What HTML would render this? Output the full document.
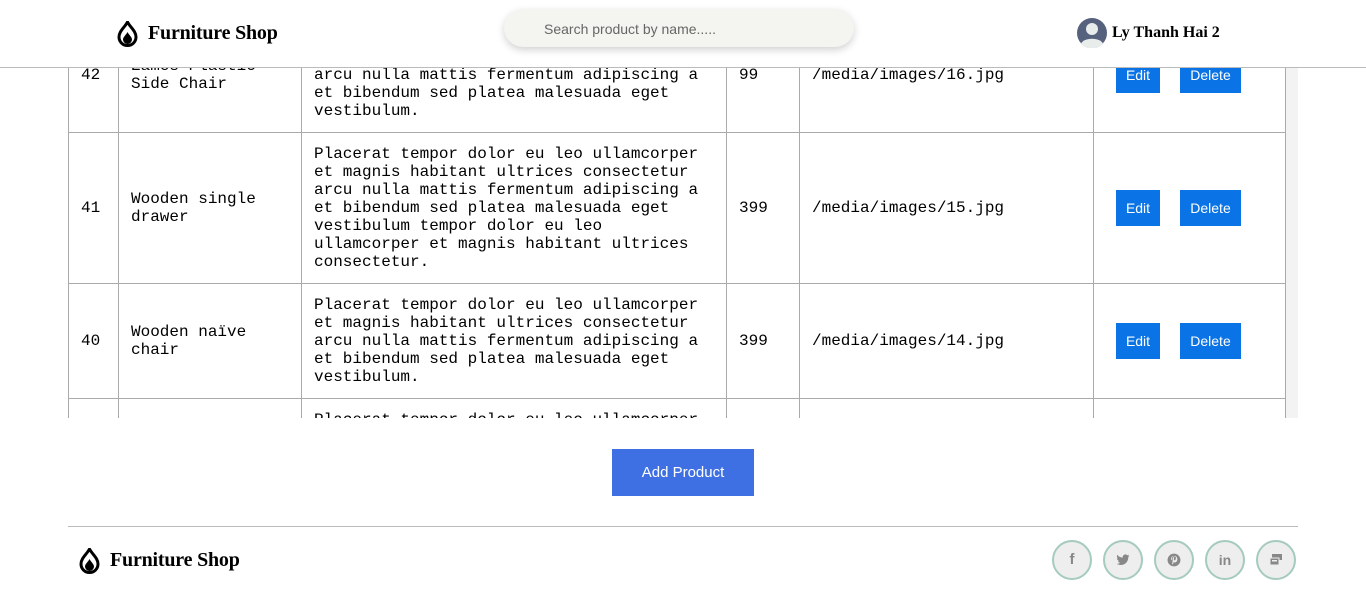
<!DOCTYPE html>
<html><head><meta charset="utf-8"><style>
*{margin:0;padding:0;box-sizing:border-box}
body{width:1366px;height:602px;overflow:hidden;background:#fff;position:relative;font-family:"Liberation Sans",sans-serif}
.hdr{position:absolute;left:0;top:0;width:1366px;height:68px;background:#fff;border-bottom:1px solid #bbb;z-index:5}
.brand{position:absolute;font-family:"Liberation Serif",serif;font-weight:bold;font-size:20px;color:#000;letter-spacing:-0.2px}
.search{position:absolute;left:504px;top:9px;width:350px;height:38px;border-radius:19px;background:#f4f4f0;box-shadow:0 3px 8px rgba(0,0,0,.18);font-size:14px;color:#666;padding:12px 0 0 40px}
.user{position:absolute;left:1077px;top:18px;display:flex;align-items:center;font-family:"Liberation Serif",serif;font-weight:bold;font-size:16px}
.wrap{position:absolute;left:68px;top:68px;width:1230px;height:350px;overflow:hidden}
.sb{position:absolute;right:0;top:0;width:12px;height:350px;background:#f3f3f3}
table{position:absolute;left:0;top:-51px;border-collapse:collapse;font-family:"Liberation Mono",monospace;font-size:16px;line-height:18px;color:#000}
td{border:1px solid #aaa;padding:12px 12px;vertical-align:middle}
.b{display:inline-block;background:#0a73e6;color:#fff;font-family:"Liberation Sans",sans-serif;font-size:14px;height:36px;line-height:36px;text-align:center}
.add{position:absolute;left:612px;top:449px;width:142px;height:47px;background:#3e6fe3;color:#fff;font-size:15px;text-align:center;line-height:47px}
.fl{position:absolute;left:68px;top:526px;width:1230px;border-top:1px solid #bbb}
.soc{position:absolute;top:540px;width:40px;height:40px;border-radius:50%;border:2px solid #a5cbbd;background:#eee;color:#888;font-weight:bold;font-size:15px;text-align:center;line-height:36px}
.soc svg{position:absolute;left:11px;top:11px}
</style></head><body>
<div class="hdr">
<svg style="position:absolute;left:117px;top:21px" width="21" height="26" viewBox="0 0 21 26"><path d="M10.5 1 C8 6 2 10 2 16 a8.5 8.5 0 0 0 17 0 C19 10 13 6 10.5 1Z" fill="none" stroke="#000" stroke-width="3"/><path d="M10.5 11 C9 14 6 16 6 18.5 a4.5 4.5 0 0 0 9 0 C15 16 12 14 10.5 11Z" fill="#000"/></svg>
<div class="brand" style="left:148px;top:22px">Furniture Shop</div>
<div class="search">Search product by name.....</div>
<div class="user"><svg width="30" height="30" viewBox="0 0 30 30"><circle cx="15" cy="15" r="15" fill="#56617e"/><circle cx="15" cy="11" r="6" fill="#e8eceb"/><path d="M4 26 C6 19 24 19 26 26 A15 15 0 0 1 4 26Z" fill="#e8eceb"/></svg><span style="margin-left:5px">Ly Thanh Hai 2</span></div>
</div>
<div class="wrap">
<table>
<colgroup><col style="width:50px"><col style="width:183px"><col style="width:425px"><col style="width:73px"><col style="width:294px"><col style="width:192px"></colgroup>
<tr style="height:115px"><td>42</td><td>Eames Plastic<br>Side Chair</td><td>Placerat tempor dolor eu leo ullamcorper<br>et magnis habitant ultrices consectetur<br>arcu nulla mattis fermentum adipiscing a<br>et bibendum sed platea malesuada eget<br>vestibulum.</td><td>99</td><td>/media/images/16.jpg</td><td style="padding-left:22px"><span class="b" style="width:44px">Edit</span><span class="b" style="width:61px;margin-left:20px">Delete</span></td></tr>
<tr style="height:151px"><td>41</td><td>Wooden single<br>drawer</td><td>Placerat tempor dolor eu leo ullamcorper<br>et magnis habitant ultrices consectetur<br>arcu nulla mattis fermentum adipiscing a<br>et bibendum sed platea malesuada eget<br>vestibulum tempor dolor eu leo<br>ullamcorper et magnis habitant ultrices<br>consectetur.</td><td>399</td><td>/media/images/15.jpg</td><td style="padding-left:22px"><span class="b" style="width:44px">Edit</span><span class="b" style="width:61px;margin-left:20px">Delete</span></td></tr>
<tr style="height:115px"><td>40</td><td>Wooden naïve<br>chair</td><td>Placerat tempor dolor eu leo ullamcorper<br>et magnis habitant ultrices consectetur<br>arcu nulla mattis fermentum adipiscing a<br>et bibendum sed platea malesuada eget<br>vestibulum.</td><td>399</td><td>/media/images/14.jpg</td><td style="padding-left:22px"><span class="b" style="width:44px">Edit</span><span class="b" style="width:61px;margin-left:20px">Delete</span></td></tr>
<tr style="height:115px"><td style="vertical-align:top"></td><td></td><td style="vertical-align:top">Placerat tempor dolor eu leo ullamcorper<br>et magnis</td><td></td><td></td><td></td></tr>
</table>
<div class="sb"></div>
</div>
<div class="add">Add Product</div>
<div class="fl"></div>
<svg style="position:absolute;left:79px;top:548px" width="21" height="26" viewBox="0 0 21 26"><path d="M10.5 1 C8 6 2 10 2 16 a8.5 8.5 0 0 0 17 0 C19 10 13 6 10.5 1Z" fill="none" stroke="#000" stroke-width="3"/><path d="M10.5 11 C9 14 6 16 6 18.5 a4.5 4.5 0 0 0 9 0 C15 16 12 14 10.5 11Z" fill="#000"/></svg>
<div class="brand" style="left:110px;top:549px">Furniture Shop</div>
<div class="soc" style="left:1052px">f</div>
<div class="soc" style="left:1103px"><svg width="14" height="14" viewBox="0 0 24 24"><path fill="#888" d="M23 4.6a9 9 0 0 1-2.7.7 4.7 4.7 0 0 0 2-2.6 9 9 0 0 1-2.9 1.1A4.6 4.6 0 0 0 11.6 8 13 13 0 0 1 2.2 3.2a4.6 4.6 0 0 0 1.4 6.2 4.6 4.6 0 0 1-2-.6 4.6 4.6 0 0 0 3.7 4.5 4.6 4.6 0 0 1-2 .1 4.6 4.6 0 0 0 4.3 3.2A9.3 9.3 0 0 1 .8 18.5 13 13 0 0 0 7.9 20.6c8.5 0 13.2-7 13.2-13.2v-.6A9.3 9.3 0 0 0 23 4.6z"/></svg></div>
<div class="soc" style="left:1154px"><svg width="14" height="14" viewBox="0 0 24 24"><circle cx="12" cy="12" r="11" fill="#888"/><path fill="#eee" d="M12.5 5C8.5 5 7 7.8 7 9.6c0 1.2.5 2.2 1.4 2.6.2.1.3 0 .4-.2l.2-.7c0-.2 0-.3-.2-.5-.3-.4-.5-.8-.5-1.5 0-2 1.5-3.7 3.8-3.7 2.1 0 3.2 1.3 3.2 3 0 2.2-1 4.1-2.5 4.1-.8 0-1.4-.7-1.2-1.5.2-1 .7-2 .7-2.7 0-.6-.3-1.2-1-1.2-.9 0-1.5.9-1.5 2.1 0 .8.2 1.3.2 1.3L9.1 17c-.3 1.3 0 2.8 0 3h.3c.2-.2 1.1-1.4 1.4-2.5l.6-2.2c.3.6 1.1 1 2 1 2.6 0 4.3-2.4 4.3-5.5C17.7 7.4 15.6 5 12.5 5z"/></svg></div>
<div class="soc" style="left:1205px;font-size:14px">in</div>
<div class="soc" style="left:1256px"><svg width="14" height="14" viewBox="0 0 14 14"><rect x="3" y="1" width="10" height="6" fill="#888"/><rect x="1" y="5" width="9" height="7" fill="#888" stroke="#eee" stroke-width="1"/><rect x="3" y="7" width="5" height="1.5" fill="#eee"/></svg></div>
</body></html>
